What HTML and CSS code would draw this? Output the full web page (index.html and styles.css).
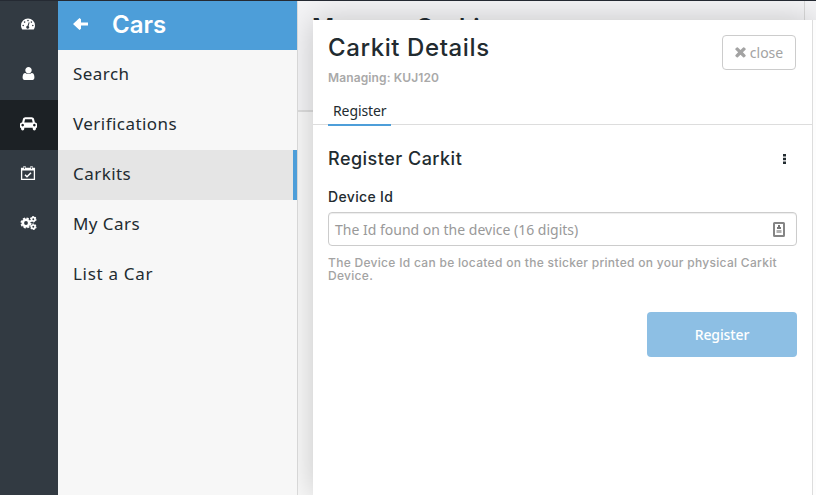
FILE: index.html
```html
<!DOCTYPE html>
<html lang="en">
<head>
<meta charset="utf-8">
<title>Carkits</title>
<link rel="stylesheet" href="styles.css">
</head>
<body>
<div class="app">
  <nav class="rail">
    <a class="rail-item"><svg width="16" height="16" viewBox="0 0 16 16"><path fill="#fff" fill-rule="evenodd" d="M2.300 13.500C1.400 12.300 1 11 1 9.500a7 7 0 0 1 14 0c0 1.500-.4 2.800-1.300 4H2.300zM2.400 9.500a.8.8 0 1 0 1.600 0 .8.8 0 1 0-1.600 0zM3.800 6.100a.8.8 0 1 0 1.600 0 .8.8 0 1 0-1.600 0zM7.200 4.600a.8.8 0 1 0 1.600 0 .8.8 0 1 0-1.600 0zM10.600 6.100a.8.8 0 1 0 1.600 0 .8.8 0 1 0-1.600 0zM12 9.500a.8.8 0 1 0 1.600 0 .8.8 0 1 0-1.600 0zM8.700 6.300 7.500 9.700a1.500 1.500 0 1 0 1.100.3l1-3.500z"/></svg></a>
    <a class="rail-item"><svg width="15" height="15" viewBox="0 0 1792 1792"><path fill="#fff" d="M1600 1399q0 109-62.500 187t-150.500 78h-982q-88 0-150.500-78t-62.500-187q0-85 8.500-160.500t31.500-152 58.500-131 94-89 134.500-34.500q131 128 377 128t377-128q76 0 134.500 34.500t94 89 58.500 131 31.500 152 8.500 160.500zm-320-887q0 159-112.500 271.500t-271.500 112.500-271.500-112.500-112.500-271.500 112.500-271.500 271.500-112.500 271.500 112.500 112.500 271.500z"/></svg></a>
    <a class="rail-item rail-current"><svg width="17" height="15" viewBox="0 0 2048 1792"><path fill="#fff" d="M480 1088q0-66-47-113t-113-47-113 47-47 113 47 113 113 47 113-47 47-113zm36-320h1016l-89-357q-2-8-14-17.500t-21-9.500h-768q-9 0-21 9.500t-14 17.500zm1372 320q0-66-47-113t-113-47-113 47-47 113 47 113 113 47 113-47 47-113zm160-96v384q0 14-9 23t-23 9h-96v128q0 80-56 136t-136 56-136-56-56-136v-128h-1024v128q0 80-56 136t-136 56-136-56-56-136v-128h-96q-14 0-23-9t-9-23v-384q0-93 65.500-158.500t158.500-65.500h28l105-419q23-94 104-157.500t179-63.500h768q98 0 179 63.500t104 157.500l105 419h28q93 0 158.500 65.500t65.500 158.500z"/></svg></a>
    <a class="rail-item"><svg width="16" height="16" viewBox="0 0 16 16"><path fill="none" stroke="#fff" stroke-width="1.300" d="M1.600 3.500h12.800v10.900H1.600z"/><path fill="#fff" d="M1 3h14v2.500H1zM3.500 1h2v3h-2zM10.500 1h2v3h-2z"/><path stroke="#323a42" stroke-width=".7" d="M4.500 1.500v2.500M11.500 1.500v2.500"/><path fill="none" stroke="#fff" stroke-width="1.500" d="m5 9.700 2 2 4-4"/></svg></a>
    <a class="rail-item"><svg width="17" height="16" viewBox="0 0 17 16"><g fill="none" stroke="#fff"><circle cx="6" cy="8" r="3.200" stroke-width="2.600"/><circle cx="6" cy="8" r="4.800" stroke-width="1.500" stroke-dasharray="2.200 1.570"/><circle cx="13.300" cy="4.200" r="1.800" stroke-width="1.700"/><circle cx="13.300" cy="4.200" r="2.700" stroke-width="1.100" stroke-dasharray="1.500 1.330"/><circle cx="13.300" cy="11.800" r="1.800" stroke-width="1.700"/><circle cx="13.300" cy="11.800" r="2.700" stroke-width="1.100" stroke-dasharray="1.500 1.330"/></g></svg></a>
  </nav>
  <aside class="menu">
    <header class="menu-head">
      <svg width="15" height="12" viewBox="0 0 15 12"><path fill="#fff" d="M0 6 6.500 0 8 1.200V4.500h7v3H8v3.300L6.500 12z"/></svg>
      <span class="menu-title">Cars</span>
    </header>
    <a class="menu-item">Search</a>
    <a class="menu-item">Verifications</a>
    <a class="menu-item selected">Carkits</a>
    <a class="menu-item">My Cars</a>
    <a class="menu-item list-car">List a Car</a>
  </aside>
  <main class="page">
    <header class="page-head"><div class="page-title">Manage Carkits</div><div class="page-tools"></div></header>
  </main>
</div>
<section class="panel">
  <header class="panel-head">
    <div class="panel-heading">
      <h1>Carkit Details</h1>
      <p class="managing">Managing: KUJ120</p>
    </div>
    <button class="close"><svg width="11" height="11" viewBox="270 350 1250 1250"><path fill="#a3a3a3" d="M1490 1322q0 40-28 68l-136 136q-28 28-68 28t-68-28l-294-294-294 294q-28 28-68 28t-68-28l-136-136q-28-28-28-68t28-68l294-294-294-294q-28-28-28-68t28-68l136-136q28-28 68-28t68 28l294 294 294-294q28-28 68-28t68 28l136 136q28 28 28 68t-28 68l-294 294 294 294q28 28 28 68z"/></svg><span>close</span></button>
  </header>
  <div class="tabs"><a class="tab">Register</a></div>
  <div class="panel-body">
    <div class="section-head">
      <h2>Register Carkit</h2>
      <svg width="3" height="10" viewBox="0 0 3 10"><path fill="#222b30" d="M0 0h3v2.500H0zM0 3.700h3v2.500H0zM0 7.400h3v2.500H0z"/></svg>
    </div>
    <div class="label">Device Id</div>
    <div class="field">
      <span class="placeholder">The Id found on the device (16 digits)</span>
      <svg width="12" height="15" viewBox="0 0 12 15"><rect x="1" y="1" width="10" height="13" rx=".5" fill="#fff" stroke="#858585" stroke-width="2"/><path fill="#777" d="M5 3h2v2h1v2H4V5h1z"/><path fill="#b0b0b0" d="M3.500 8h5v3h-5z"/></svg>
    </div>
    <p class="help">The Device Id can be located on the sticker printed on your physical Carkit Device.</p>
    <button class="submit">Register</button>
  </div>
</section>
</body>
</html>
```
FILE: styles.css
```css
* { box-sizing: border-box; }
body {
  margin: 0;
  width: 816px;
  height: 495px;
  overflow: hidden;
  position: relative;
  color: #222b30;
  font-family: "Noto Sans", sans-serif;
}
h1, h2, p { margin: 0; }
svg { display: block; flex: none; }
button { font-family: inherit; cursor: pointer; }

.app { display: flex; height: 495px; border-top: 1px solid #252a33; }

.rail { width: 58px; background: #323a42; }
.rail-item {
  display: flex;
  align-items: center;
  justify-content: center;
  height: 50px;
  padding: 0 2px 4px 0;
}
.rail-item:first-child { height: 49px; }
.rail-current { background: #1c2125; }

.menu { position: relative; z-index: 2; width: 239px; background: #f7f7f7; }
.menu-head {
  display: flex;
  align-items: center;
  height: 49px;
  padding: 0 15px 3px;
  gap: 24px;
  background: #4d9ed9;
  color: #fff;
}
.menu-title { padding-top: 2px; font: 600 24px/30px Inter, sans-serif; }
.menu-item {
  display: block;
  height: 50px;
  padding-left: 15px;
  font-size: 17px;
  line-height: 47px;
  letter-spacing: .45px;
  white-space: nowrap;
}
.list-car { letter-spacing: .7px; }
.selected { background: #e5e5e5; border-right: 4px solid #4d9ed9; }

.page { flex: 1; background: #f8f8f8; border-left: 1px solid #ddd; }
.page-head {
  display: flex;
  justify-content: space-between;
  height: 111px;
  background: #f4f4f6;
  border-bottom: 2px solid #ddd;
}
.page-title {
  padding: 12px 0 0 14px;
  font: 600 24px/30px Inter, sans-serif;
  letter-spacing: .6px;
}
.page-tools { width: 12px; border-left: 1px solid #d8d8d8; }

.panel {
  position: absolute;
  z-index: 1;
  left: 313px;
  top: 20px;
  width: 500px;
  height: 475px;
  background: #fff;
  border-right: 1px solid #ddd;
  box-shadow: 3px 0 0 #fdfdfd, 0 0 30px rgba(0, 0, 0, .2);
}
.panel-head {
  display: flex;
  justify-content: space-between;
  height: 79px;
  padding: 15px 16px 0 15px;
}
.panel-heading { margin-top: -2px; }
h1 {
  font: 500 24px/30px Inter, sans-serif;
  letter-spacing: .6px;
  white-space: nowrap;
}
.managing {
  margin-top: 7px;
  font: 600 12px/16px Inter, sans-serif;
  letter-spacing: .12px;
  color: #a9a9a9;
  white-space: nowrap;
}
.close {
  display: flex;
  align-items: center;
  justify-content: center;
  gap: 4px;
  width: 74px;
  height: 35px;
  padding: 0;
  border: 1px solid #ccc;
  border-radius: 4px;
  background: #fff;
  color: #a3a3a3;
  font-size: 14px;
}
.tabs { height: 26px; padding-left: 15px; border-bottom: 1px solid #ddd; }
.tab {
  display: block;
  width: 63px;
  height: 27px;
  padding-left: 5px;
  border-bottom: 2px solid #4d9ed9;
  font-size: 14px;
  line-height: 24px;
  letter-spacing: -.1px;
}
.panel-body { padding: 19px 15px 0; }
.section-head {
  display: flex;
  align-items: center;
  justify-content: space-between;
  height: 30px;
  padding-right: 11px;
}
h2 {
  font: 500 18px/30px Inter, sans-serif;
  letter-spacing: .48px;
  white-space: nowrap;
}
.label {
  margin-top: 13px;
  font: 500 14px/20px Inter, sans-serif;
  letter-spacing: .35px;
}
.field {
  display: flex;
  align-items: center;
  justify-content: space-between;
  width: 469px;
  height: 34px;
  margin-top: 5px;
  padding: 0 11px 0 6px;
  border: 1px solid #ccc;
  border-radius: 4px;
  box-shadow: inset 0 1px 1px rgba(0, 0, 0, .075);
  font-size: 14px;
  color: #999;
  white-space: nowrap;
}
.help {
  margin-top: 10px;
  font: 500 12px/13px Inter, sans-serif;
  letter-spacing: .3px;
  color: #a3a3a3;
}
.submit {
  display: block;
  width: 150px;
  height: 45px;
  margin: 30px 0 0 319px;
  padding: 0;
  border: 0;
  border-radius: 4px;
  background: #8dbfe4;
  color: #fff;
  font-size: 14px;
  font-weight: 500;
  letter-spacing: -.1px;
}
```
